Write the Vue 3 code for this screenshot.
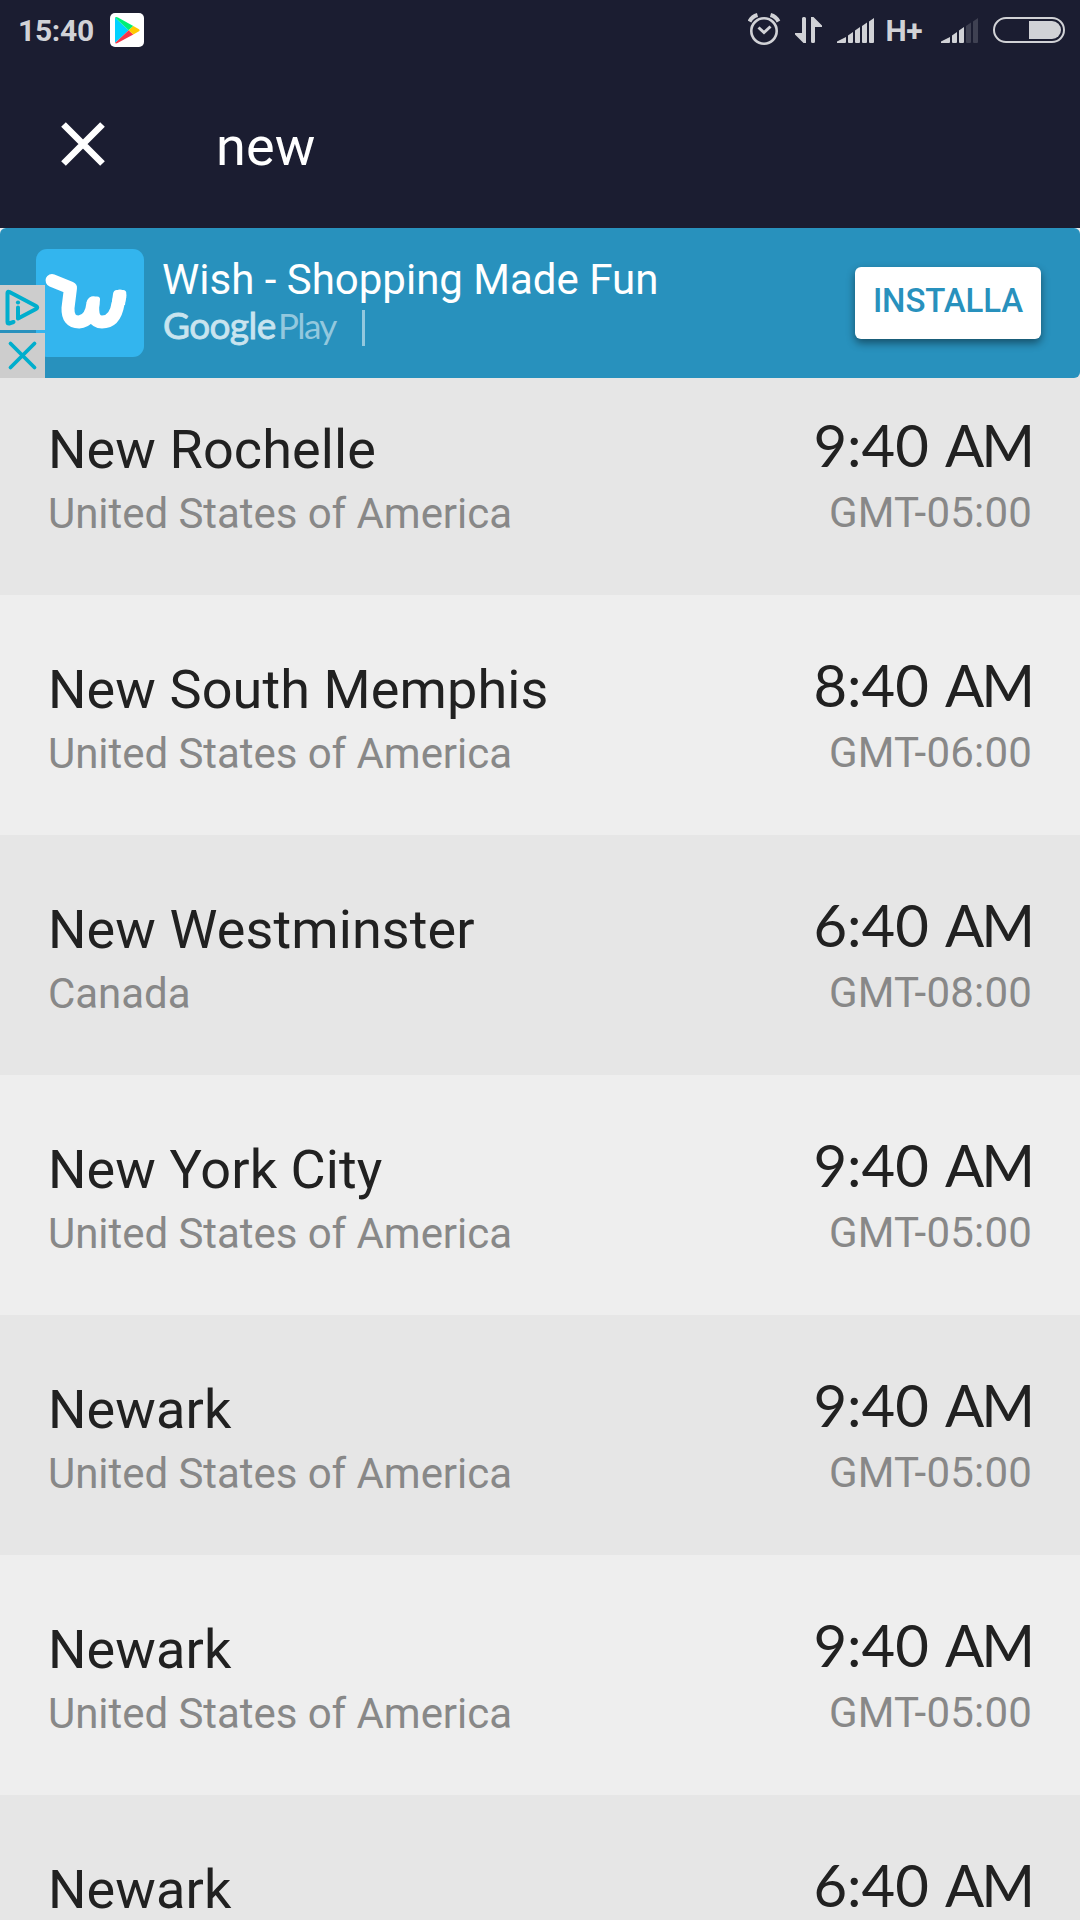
<template>
  <div class="screen">
    <!-- status bar -->
    <div class="status-bar">
      <span class="clock">15:40</span>
      <svg class="play-badge" width="34" height="34" viewBox="0 0 34 34">
        <rect width="34" height="34" rx="5" fill="#fff" />
        <path d="M5 4.500 V30 L18.700 17.300 Z" fill="#00d2ff" />
        <path d="M5 4.500 Q6 3.500 8 4.500 L23.300 13 L18.700 17.300 Z" fill="#00f076" />
        <path d="M5 30 Q6 31 8 29.700 L23.300 21.600 L18.700 17.300 Z" fill="#f93647" />
        <path d="M23.300 13 L29 16.200 Q30.500 17.300 29 18.300 L23.300 21.600 L18.700 17.300 Z" fill="#ffc900" />
      </svg>
      <svg class="status-icons" width="332" height="60" viewBox="0 0 332 60">
        <!-- alarm -->
        <g fill="none" stroke="#d1d2d6">
          <circle cx="16" cy="31" r="12.700" stroke-width="2.600" />
          <path d="M10.500 27.500 L16 32.500 L22.500 26.500" stroke-width="3" />
          <path d="M1.500 21.500 Q4 16.500 9.500 15" stroke-width="4" />
          <path d="M30.500 21.500 Q28 16.500 22.500 15" stroke-width="4" />
        </g>
        <!-- data arrows -->
        <g fill="#d1d2d6">
          <path d="M54 18.500 Q54 17 55.500 17 H56.500 Q58 17 58 18.500 V43 H55.500 L47 34.500 V33 H54 Z" />
          <path d="M63 17 H65.500 L74 25.500 V27 H67 V41.500 Q67 43 65.500 43 H64.500 Q63 43 63 41.500 Z" />
        </g>
        <g v-for="signal in signals" :key="signal.x" :transform="`translate(${signal.x} 0)`" fill="#d1d2d6">
          <path
            v-for="(bar, index) in bars"
            :key="index"
            :d="bar"
            :opacity="index < signal.level ? 1 : 0.2"
          />
        </g>
        <text x="137.500" y="41" class="network">H+</text>
        <!-- battery -->
        <rect x="246" y="18" width="70" height="24" rx="12" fill="none" stroke="#d1d2d6" stroke-width="2" />
        <path d="M281 21 H304 A9 9 0 0 1 304 39 H281 Z" fill="#d1d2d6" />
      </svg>
    </div>

    <!-- search bar -->
    <div class="search-bar">
      <svg class="close" width="44" height="44" viewBox="0 0 44 44">
        <path d="M2.500 2.500 L41.500 41.500 M41.500 2.500 L2.500 41.500" stroke="#fff" stroke-width="6.600" />
      </svg>
      <span class="query">{{ query }}</span>
    </div>

    <!-- ad banner -->
    <div class="ad">
      <svg class="wish-icon" width="108" height="108" viewBox="0 0 108 108">
        <rect width="108" height="108" rx="11" fill="#33b5ee" />
        <path
          d="M16 31.500 L34.500 39 L32 59 Q31.500 73 43 73 Q55 72 57 54 Q55 73 66 73 Q79 73 82 55 L84 47"
          fill="none" stroke="#fff" stroke-width="13" stroke-linecap="round" stroke-linejoin="round"
        />
        <path d="M77 45 Q77.500 41 81 41 H87 Q90.500 41 90.300 44.500 L89 56 H75.500 Z M52 52 Q53 47.500 57 47.500 H61 Q64.500 47.500 64 51 L62.500 62 L57 74 L51 62 Z" fill="#fff" />
      </svg>
      <div class="ad-text">
        <div class="ad-title">Wish - Shopping Made Fun</div>
        <div class="ad-store">
          <span class="google">Google</span>
          <span class="play">Play</span>
          <span class="divider"></span>
        </div>
      </div>
      <button class="install">INSTALLA</button>
      <div class="ad-controls">
        <svg width="45" height="45" viewBox="0 0 45 45">
          <rect width="45" height="45" fill="#cdcdcd" />
          <path d="M13.500 37 L9 38.500 Q7.500 38.500 7.500 37 V8 Q7.500 6 9.500 7 L36 21 Q38.500 22.500 36 24 L18 33.500 V22.500" fill="none" stroke="#00aecd" stroke-width="4" stroke-linejoin="round" stroke-linecap="round" />
          <circle cx="18" cy="17.500" r="2.100" fill="#00aecd" />
        </svg>
        <svg width="45" height="45" viewBox="0 0 45 45">
          <rect width="45" height="45" fill="#cdcdcd" />
          <path d="M10.500 10.500 L34.500 34.500 M34.500 10.500 L10.500 34.500" stroke="#00aecd" stroke-width="3.800" stroke-linecap="round" />
        </svg>
      </div>
    </div>

    <!-- results -->
    <div class="results">
      <div v-for="(city, index) in cities" :key="index" class="row">
        <div class="place">
          <div class="name">{{ city.name }}</div>
          <div class="country">{{ city.country }}</div>
        </div>
        <div class="when">
          <div class="time">
            <span class="digits">{{ city.time }}</span>
            <span class="period">AM</span>
          </div>
          <div class="zone">{{ city.zone }}</div>
        </div>
      </div>
    </div>
  </div>
</template>

<script setup>
import { ref } from 'vue';

const query = ref('new');

const cities = ref([
  { name: 'New Rochelle', country: 'United States of America', time: '9:40', zone: 'GMT-05:00' },
  { name: 'New South Memphis', country: 'United States of America', time: '8:40', zone: 'GMT-06:00' },
  { name: 'New Westminster', country: 'Canada', time: '6:40', zone: 'GMT-08:00' },
  { name: 'New York City', country: 'United States of America', time: '9:40', zone: 'GMT-05:00' },
  { name: 'Newark', country: 'United States of America', time: '9:40', zone: 'GMT-05:00' },
  { name: 'Newark', country: 'United States of America', time: '9:40', zone: 'GMT-05:00' },
  { name: 'Newark', country: '', time: '6:40', zone: '' }
]);

// one entry per SIM card
const signals = [
  { x: 89, level: 5 },
  { x: 193, level: 3 }
];

const bars = [
  'M0 43 V41.500 L9 37 V42 Q9 43 8 43 Z',
  'M11 35.500 L16 32 V42 Q16 43 15 43 H12 Q11 43 11 42 Z',
  'M18 30.500 L23 27 V42 Q23 43 22 43 H19 Q18 43 18 42 Z',
  'M25 26 L30 22.500 V42 Q30 43 29 43 H26 Q25 43 25 42 Z',
  'M32 21.500 L37 18 V42 Q37 43 36 43 H33 Q32 43 32 42 Z'
];
</script>

<style>
body {
  margin: 0;
}
</style>

<style scoped>
.screen {
  width: 1080px;
  height: 1920px;
  overflow: hidden;
  background: #eee;
  font-family: Roboto, sans-serif;
}

.status-bar {
  display: flex;
  align-items: center;
  height: 60px;
  padding-left: 18px;
  background: #1b1d31;
}

.clock {
  width: 92px;
  padding-top: 1px;
  color: #d1d2d6;
  font-size: 30px;
  font-weight: 700;
  letter-spacing: -0.3px;
  line-height: 60px;
}

.status-icons {
  margin-left: auto;
}

.network {
  fill: #d1d2d6;
  font-size: 30px;
  font-weight: 700;
  letter-spacing: -0.5px;
}

.search-bar {
  display: flex;
  align-items: center;
  height: 168px;
  padding-left: 61px;
  background: #1b1d31;
}

.close {
  margin-bottom: 1px;
}

.query {
  margin-left: 111px;
  padding-top: 4px;
  color: #fff;
  font-size: 54px;
  letter-spacing: 0.2px;
}

.ad {
  position: relative;
  z-index: 1;
  display: flex;
  align-items: flex-start;
  box-sizing: border-box;
  height: 150px;
  padding: 21px 39px 0 36px;
  border-radius: 6px;
  background: #2891bd;
}

.ad-text {
  flex: 1;
  padding: 6px 0 0 18px;
}

.ad-title {
  color: #fff;
  font-size: 42px;
  line-height: 50px;
}

.ad-store {
  display: flex;
  align-items: center;
  height: 40px;
  padding-left: 1px;
  font-family: Lato, sans-serif;
  line-height: 40px;
}

.google {
  width: 115px;
  color: #c9e4ef;
  font-size: 37px;
  letter-spacing: -0.6px;
  -webkit-text-stroke: 0.8px #c9e4ef;
}

.play {
  width: 84px;
  color: #93c8de;
  font-size: 35px;
  letter-spacing: -1.6px;
}

.divider {
  width: 3px;
  height: 36px;
  margin-top: 6px;
  background: #93c8de;
}

.install {
  width: 186px;
  height: 72px;
  margin-top: 18px;
  padding: 0 0 6px;
  border: none;
  border-radius: 6px;
  background: #fff;
  box-shadow: 0 4px 8px rgba(0, 0, 0, 0.45);
  color: #2891bd;
  font-family: Roboto, sans-serif;
  font-size: 33px;
  font-weight: 500;
  letter-spacing: -0.1px;
}

/* the ad choice buttons lie over the banner and its icon */
.ad-controls {
  position: absolute;
  left: 0;
  bottom: 0;
  display: flex;
  flex-direction: column;
  gap: 3px;
}

/* the list is scrolled a little way under the banner */
.results {
  margin-top: -23px;
}

.row {
  display: flex;
  justify-content: space-between;
  box-sizing: border-box;
  height: 240px;
  padding: 0 48px;
  background: #eee;
}

.row:nth-child(odd) {
  background: #e6e6e6;
}

.place {
  padding-top: 65px;
}

.name {
  color: #212121;
  font-size: 54px;
  letter-spacing: 0.1px;
  line-height: 60px;
}

.country {
  margin-top: 9px;
  color: #888;
  font-size: 42px;
  letter-spacing: -0.05px;
  line-height: 50px;
}

.when {
  padding-top: 60px;
  text-align: right;
}

.time {
  display: flex;
  justify-content: flex-end;
  gap: 16px;
  color: #212121;
  font-family: Lato, sans-serif;
  font-size: 58px;
  line-height: 60px;
}

.period {
  letter-spacing: -3px;
}

.zone {
  margin-top: 13px;
  color: #888;
  font-size: 42px;
  letter-spacing: 0.2px;
  line-height: 50px;
}
</style>
